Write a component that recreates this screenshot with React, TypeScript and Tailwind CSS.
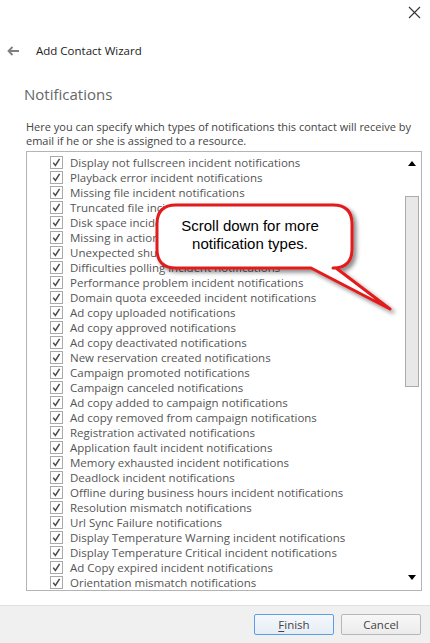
import React from 'react';

const items = [
  'Display not fullscreen incident notifications',
  'Playback error incident notifications',
  'Missing file incident notifications',
  'Truncated file incident notifications',
  'Disk space incident notifications',
  'Missing in action incident notifications',
  'Unexpected shutdown incident notifications',
  'Difficulties polling incident notifications',
  'Performance problem incident notifications',
  'Domain quota exceeded incident notifications',
  'Ad copy uploaded notifications',
  'Ad copy approved notifications',
  'Ad copy deactivated notifications',
  'New reservation created notifications',
  'Campaign promoted notifications',
  'Campaign canceled notifications',
  'Ad copy added to campaign notifications',
  'Ad copy removed from campaign notifications',
  'Registration activated notifications',
  'Application fault incident notifications',
  'Memory exhausted incident notifications',
  'Deadlock incident notifications',
  'Offline during business hours incident notifications',
  'Resolution mismatch notifications',
  'Url Sync Failure notifications',
  'Display Temperature Warning incident notifications',
  'Display Temperature Critical incident notifications',
  'Ad Copy expired incident notifications',
  'Orientation mismatch notifications',
];

const Check: React.FC = () => (
  <span className="w-[13px] h-[13px] border border-[#a9a9a9] bg-white flex items-center justify-center shrink-0">
    <svg width="9" height="9" viewBox="0 0 9 9">
      <path d="M1.2 4.6 L3.4 7.4 L7.6 0.8" fill="none" stroke="#4a4a4a" strokeWidth="1.5" />
    </svg>
  </span>
);

const Callout: React.FC = () => (
  <div className="absolute left-[150px] top-[198px] w-[250px] h-[120px] pointer-events-none">
    <svg width="250" height="120" viewBox="150 198 250 120" className="absolute inset-0">
      <defs>
        <filter id="sh" x="-10%" y="-10%" width="130%" height="140%">
          <feDropShadow dx="3" dy="3" stdDeviation="2" floodColor="#000" floodOpacity="0.45" />
        </filter>
      </defs>
      <path
        d="M176 205 H333 Q352 205 352 224 V249 Q352 268 333 268 H336 L390 309 L311 268 H176 Q157 268 157 249 V224 Q157 205 176 205 Z"
        fill="#ffffff"
        stroke="#e21c1c"
        strokeWidth="3"
        strokeLinejoin="round"
        filter="url(#sh)"
      />
    </svg>
    <div className="absolute left-[0px] top-[19px] w-[200px] text-center text-[15px] leading-[18px] text-black font-['Liberation_Sans',Arial,sans-serif]">
      Scroll down for more
      <br />
      notification types.
    </div>
  </div>
);

export default function App() {
  return (
    <div className="relative w-[430px] h-[643px] bg-white flex flex-col font-['Open_Sans',sans-serif] overflow-hidden">
      <div className="h-[28px] flex items-start justify-end pr-[9px] pt-[6px]">
        <svg width="13" height="13" viewBox="0 0 13 13">
          <path d="M1 1 L12 12 M12 1 L1 12" stroke="#333" strokeWidth="1.1" />
        </svg>
      </div>
      <div className="flex items-center h-[46px] pl-[7px] pb-[1px]">
        <svg width="13" height="10" viewBox="0 0 13 10">
          <path d="M12 5 H2 M5.5 1 L1.5 5 L5.5 9" fill="none" stroke="#808080" strokeWidth="1.8" />
        </svg>
        <span className="ml-[16px] text-[11.5px] text-[#222]">Add Contact Wizard</span>
      </div>
      <div className="pl-[24px] pt-[9px] text-[15px] text-[#666] leading-[22px]">Notifications</div>
      <p className="pl-[26px] pr-[8px] pt-[15px] text-[11px] leading-[14px] text-[#444]">
        Here you can specify which types of notifications this contact will receive by email if he or she is assigned to a resource.
      </p>
      <div className="ml-[26px] mr-[8px] mt-[3px] h-[440px] border border-[#b4b4b4] flex">
        <ul className="flex-1 pl-[23px] pt-[3px]">
          {items.map((t) => (
            <li key={t} className="h-[15px] flex items-center gap-[7px] whitespace-nowrap text-[11.5px] text-[#555]">
              <Check />
              <span>{t}</span>
            </li>
          ))}
        </ul>
        <div className="w-[17px] flex flex-col items-center pr-[1px]">
          <div className="h-[44px] pt-[9px]">
            <svg width="8" height="5" viewBox="0 0 8 5">
              <path d="M0 5 L4 0 L8 5 Z" fill="#000" />
            </svg>
          </div>
          <div className="w-[14px] h-[191px] border border-[#ababab] bg-[#e8e8e8]" />
          <div className="flex-1" />
          <div className="h-[17px] pt-[2px]">
            <svg width="8" height="5" viewBox="0 0 8 5">
              <path d="M0 0 L4 5 L8 0 Z" fill="#000" />
            </svg>
          </div>
        </div>
      </div>
      <div className="flex-1" />
      <div className="h-[38px] bg-[#f0f0f0] border-t border-[#dfdfdf] flex items-start justify-end gap-[7px] pr-[9px] pt-[8px]">
        <button className="w-[80px] h-[21px] rounded-[2px] border border-[#5b9ee6] bg-gradient-to-b from-[#f4f8fc] to-[#e6edf5] text-[11.5px] text-[#444]">
          <span className="underline underline-offset-2">F</span>inish
        </button>
        <button className="w-[80px] h-[21px] rounded-[2px] border border-[#b7b7b7] bg-gradient-to-b from-[#f7f7f7] to-[#ececec] text-[11.5px] text-[#444]">
          Cancel
        </button>
      </div>
      <Callout />
    </div>
  );
}
